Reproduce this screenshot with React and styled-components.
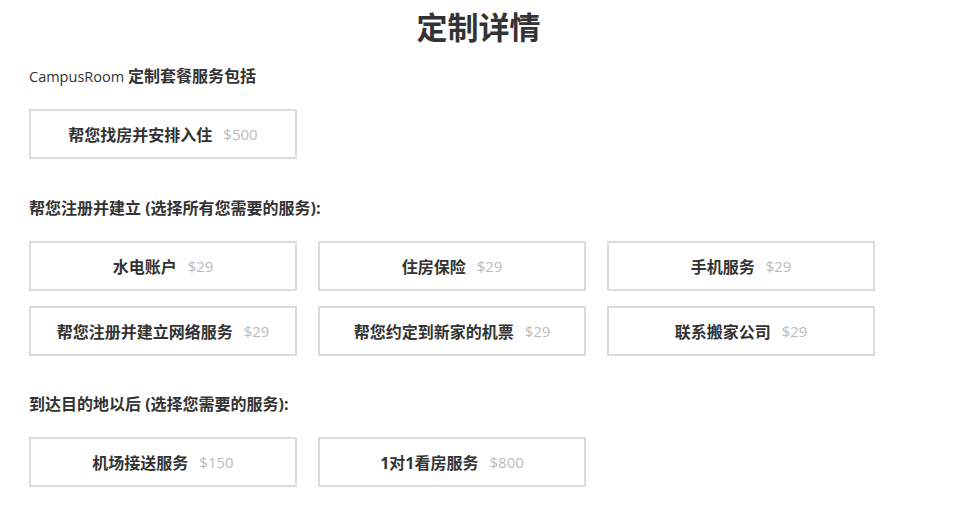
import React from "react";
import styled, { createGlobalStyle } from "styled-components";

const GlobalStyle = createGlobalStyle`
  html, body {
    margin: 0;
    padding: 0;
    background: #fff;
  }
  body {
    font-family: "Open Sans", "Noto Sans CJK SC", sans-serif;
    color: #333;
  }
`;

const Page = styled.div`
  width: 969px;
  padding: 0 29px;
  box-sizing: border-box;
`;

const Title = styled.h1`
  margin: 0;
  padding: 4px 12px 0 0;
  height: 44px;
  line-height: 44px;
  text-align: center;
  font-size: 31px;
  font-weight: 700;
  font-family: "Noto Sans CJK SC", sans-serif;
  color: #333;
`;

const Intro = styled.p`
  margin: 15px 0 0;
  height: 24px;
  line-height: 24px;
  font-size: 14.5px;
  color: #333;

  b {
    font-family: "Noto Sans CJK SC", sans-serif;
    font-size: 16px;
    font-weight: 700;
  }
`;

const Label = styled.p`
  margin: ${(p) => p.top}px 0 0;
  height: 24px;
  line-height: 24px;
  font-size: 16px;
  font-weight: 700;
  font-family: "Open Sans", "Noto Sans CJK SC", sans-serif;
  color: #333;
`;

const Grid = styled.div`
  display: grid;
  grid-template-columns: repeat(3, 268px);
  column-gap: 21px;
  row-gap: 15px;
  margin-top: ${(p) => p.top}px;
`;

const Option = styled.div`
  box-sizing: border-box;
  height: 50px;
  border: 2px solid #dcdcdc;
  display: flex;
  align-items: center;
  justify-content: center;
  gap: 11px;
  font-size: 16px;
`;

const Name = styled.span`
  font-weight: 700;
  font-family: "Open Sans", "Noto Sans CJK SC", sans-serif;
  color: #333;
`;

const Price = styled.span`
  font-family: "Open Sans", sans-serif;
  font-size: 15px;
  color: #bbb;
`;

const Item = ({ name, price }) => (
  <Option>
    <Name>{name}</Name>
    <Price>${price}</Price>
  </Option>
);

const setup = [
  ["水电账户", 29],
  ["住房保险", 29],
  ["手机服务", 29],
  ["帮您注册并建立网络服务", 29],
  ["帮您约定到新家的机票", 29],
  ["联系搬家公司", 29],
];

const arrival = [
  ["机场接送服务", 150],
  ["1对1看房服务", 800],
];

export default function App() {
  return (
    <Page>
      <GlobalStyle />
      <Title>定制详情</Title>
      <Intro>
        CampusRoom <b>定制套餐服务包括</b>
      </Intro>
      <Grid top={22}>
        <Item name="帮您找房并安排入住" price={500} />
      </Grid>
      <Label top={37}>帮您注册并建立 (选择所有您需要的服务):</Label>
      <Grid top={21}>
        {setup.map(([n, p]) => (
          <Item key={n} name={n} price={p} />
        ))}
      </Grid>
      <Label top={36}>到达目的地以后 (选择您需要的服务):</Label>
      <Grid top={21}>
        {arrival.map(([n, p]) => (
          <Item key={n} name={n} price={p} />
        ))}
      </Grid>
    </Page>
  );
}
